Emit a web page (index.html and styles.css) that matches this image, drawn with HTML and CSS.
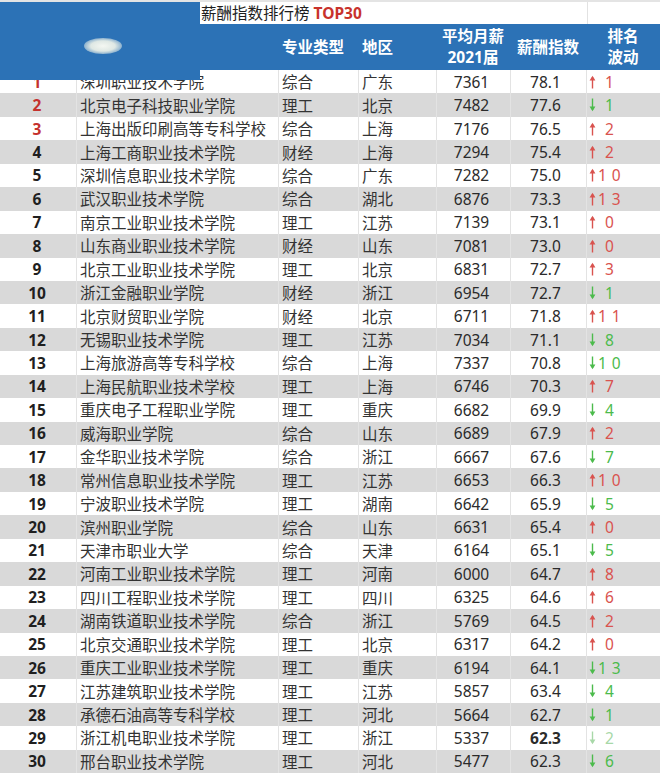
FILE: index.html
```html
<!DOCTYPE html>
<html lang="zh">
<head>
<meta charset="utf-8">
<title>薪酬指数排行榜 TOP30</title>
<link rel="stylesheet" href="styles.css">
</head>
<body>
<div class="page">
  <div class="titlebar">
    <div class="title">薪酬指数排行榜 <b>TOP30</b></div>
    <div class="tb-end"></div>
  </div>
  <div class="grid">
    <div class="h"></div>
    <div class="h"></div>
    <div class="h l">专业类型</div>
    <div class="h l">地区</div>
    <div class="h c">平均月薪<br>2021届</div>
    <div class="h c">薪酬指数</div>
    <div class="h c">排名<br>波动</div>
  </div>
  <div class="grid rows" id="rows"></div>
  <div class="cover"><span class="blob"></span></div>
</div>
<script src="app.js"></script>
</body>
</html>
```
FILE: app.js
```js
const data = [
["深圳职业技术学院","综合","广东","7361","78.1","u","1"],
["北京电子科技职业学院","理工","北京","7482","77.6","d","1"],
["上海出版印刷高等专科学校","综合","上海","7176","76.5","u","2"],
["上海工商职业技术学院","财经","上海","7294","75.4","u","2"],
["深圳信息职业技术学院","综合","广东","7282","75.0","u","10"],
["武汉职业技术学院","综合","湖北","6876","73.3","u","13"],
["南京工业职业技术学院","理工","江苏","7139","73.1","u","0"],
["山东商业职业技术学院","财经","山东","7081","73.0","u","0"],
["北京工业职业技术学院","理工","北京","6831","72.7","u","3"],
["浙江金融职业学院","财经","浙江","6954","72.7","d","1"],
["北京财贸职业学院","财经","北京","6711","71.8","u","11"],
["无锡职业技术学院","理工","江苏","7034","71.1","d","8"],
["上海旅游高等专科学校","综合","上海","7337","70.8","d","10"],
["上海民航职业技术学校","理工","上海","6746","70.3","u","7"],
["重庆电子工程职业学院","理工","重庆","6682","69.9","d","4"],
["威海职业学院","综合","山东","6689","67.9","u","2"],
["金华职业技术学院","综合","浙江","6667","67.6","d","7"],
["常州信息职业技术学院","理工","江苏","6653","66.3","u","10"],
["宁波职业技术学院","理工","湖南","6642","65.9","d","5"],
["滨州职业学院","综合","山东","6631","65.4","u","0"],
["天津市职业大学","综合","天津","6164","65.1","d","5"],
["河南工业职业技术学院","理工","河南","6000","64.7","u","8"],
["四川工程职业技术学院","理工","四川","6325","64.6","u","6"],
["湖南铁道职业技术学院","综合","浙江","5769","64.5","u","2"],
["北京交通职业技术学院","理工","北京","6317","64.2","u","0"],
["重庆工业职业技术学院","理工","重庆","6194","64.1","d","13"],
["江苏建筑职业技术学院","理工","江苏","5857","63.4","d","4"],
["承德石油高等专科学校","理工","河北","5664","62.7","d","1"],
["浙江机电职业技术学院","理工","浙江","5337","62.3","d","2"],
["邢台职业技术学院","理工","河北","5477","62.3","d","6"]
];
const up = '<svg class="ar" viewBox="0 0 7 14" width="7" height="14"><path d="M3.5 13.5V2" stroke="currentColor" stroke-width="1.4" fill="none"/><path d="M0.6 5.6L3.5 0.8L6.4 5.6Z" fill="currentColor"/></svg>';
const dn = '<svg class="ar" viewBox="0 0 7 14" width="7" height="14"><path d="M3.5 0.5V12" stroke="currentColor" stroke-width="1.4" fill="none"/><path d="M0.6 8.4L3.5 13.2L6.4 8.4Z" fill="currentColor"/></svg>';
const rows = document.getElementById('rows');
let html = '';
data.forEach((r, i) => {
  const n = i + 1;
  const cls = (n % 2 === 0 ? 'even' : 'odd') + (n === 29 ? ' r29' : '');
  const rk = n <= 3 ? 'rk top' : 'rk';
  const fl = r[5] === 'u' ? 'fl up' : 'fl dn';
  const dg = r[6].length === 1 ? 'dg one' : 'dg';
  html += `<div class="${rk} ${cls}">${n}</div>` +
    `<div class="nm ${cls}">${r[0]}</div>` +
    `<div class="tx ${cls}">${r[1]}</div>` +
    `<div class="tx ${cls}">${r[2]}</div>` +
    `<div class="num ${cls}">${r[3]}</div>` +
    `<div class="num idx ${cls}">${r[4]}</div>` +
    `<div class="${fl} ${cls}">${r[5] === 'u' ? up : dn}<span class="${dg}">${r[6]}</span></div>`;
});
rows.innerHTML = html;
```
FILE: styles.css
```css
html, body {
  margin: 0;
  padding: 0;
  background: #fff;
}
.page {
  position: relative;
  width: 660px;
  height: 774px;
  overflow: hidden;
  font-family: "Noto Sans", "Noto Sans CJK SC", sans-serif;
  color: #2b2b2b;
}
.titlebar {
  height: 24px;
  display: flex;
  border-top: 2px solid #e4e4e4;
  box-sizing: border-box;
}
.title {
  width: 386px;
  padding-left: 201px;
  font-size: 15.5px;
  line-height: 22px;
  color: #1e1e1e;
}
.title b {
  color: #c8322c;
  font-weight: 700;
}
.tb-end {
  border-left: 1px solid #e2e2e2;
  flex: 1;
}
.grid {
  display: grid;
  grid-template-columns: 76px 202px 80px 78px 74px 76px 74px;
}
.h {
  height: 46px;
  background: #2c72b6;
  color: #fff;
  font-weight: 700;
  font-size: 15.5px;
  line-height: 21px;
  display: flex;
  align-items: center;
}
.h.l { padding-left: 4px; }
.h.c { justify-content: center; text-align: center; }
.rows {
  grid-auto-rows: 23.45px;
}
.rows > div {
  font-size: 15.5px;
  display: flex;
  align-items: center;
  box-sizing: border-box;
  white-space: nowrap;
}
.odd { background: #fff; }
.even { background: #d9d9d9; }
.rows > div:not(.rk) {
  border-left: 1px solid #e3e3e3;
}
.rk {
  justify-content: center;
  font-weight: 700;
  color: #1f1f1f;
  padding-right: 2px;
}
.rk.top { color: #c4312d; }
.nm { padding-left: 3px; color: #333; }
.tx { padding-left: 3px; color: #333; }
.num { justify-content: center; padding-right: 4px; color: #2b2b2b; }
.num.idx { padding-right: 6px; }
.r29.idx { font-weight: 700; }
.fl { padding-left: 2px; }
.fl.up { color: #d9534f; }
.fl.dn { color: #4cbb4c; }
.ar { flex: none; }
.dg {
  margin-left: 2px;
  letter-spacing: 5px;
}
.dg.one { margin-left: 9px; }
.r29.fl { color: #a8d8a8; }
.cover {
  position: absolute;
  left: 0;
  top: 2px;
  width: 200px;
  height: 78px;
  background: #2c72b6;
}
.blob {
  position: absolute;
  left: 84px;
  top: 36px;
  width: 38px;
  height: 16px;
  border-radius: 50%;
  background: radial-gradient(ellipse at center, #f4f7f2 0%, #dfe8e4 45%, rgba(44,114,182,0) 100%);
}
```
